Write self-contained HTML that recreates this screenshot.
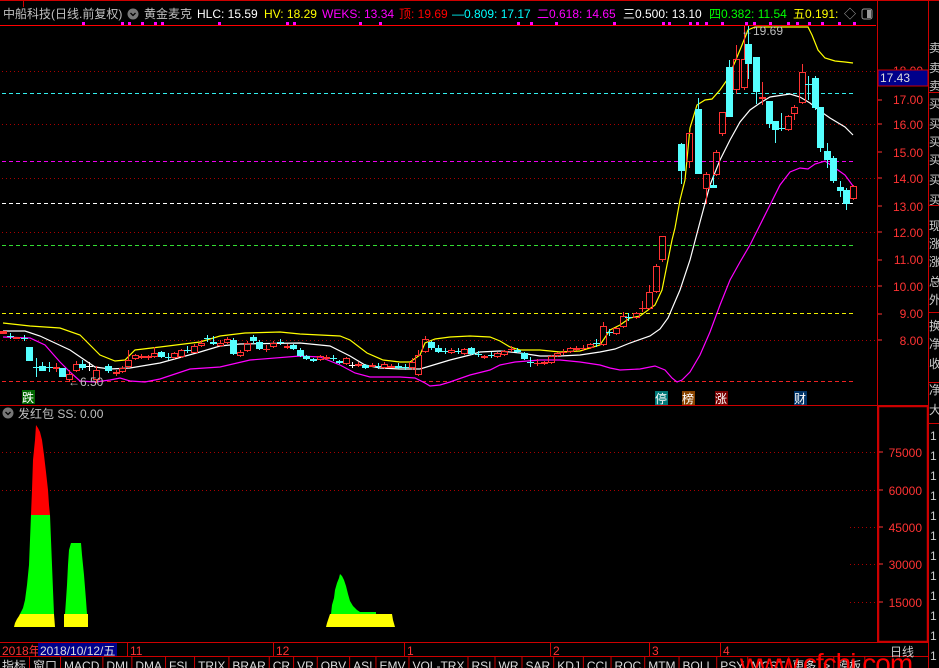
<!DOCTYPE html>
<html><head><meta charset="utf-8">
<style>
html,body{margin:0;padding:0;background:#000;width:939px;height:668px;overflow:hidden}
svg{display:block}
text{font-family:"Liberation Sans","Noto Sans CJK SC",sans-serif;font-size:12px}
</style></head>
<body>
<svg id="s" width="939" height="668" viewBox="0 0 939 668" xmlns="http://www.w3.org/2000/svg">
<rect width="939" height="668" fill="#000"/>
<!-- frame lines -->
<line x1="0" y1="0.5" x2="939" y2="0.5" stroke="#c00"/>
<line x1="23.5" y1="0" x2="23.5" y2="7" stroke="#c00"/>
<line x1="0" y1="25.5" x2="876" y2="25.5" stroke="#f00"/>
<line x1="877.5" y1="0" x2="877.5" y2="642" stroke="#c00"/>
<line x1="928.5" y1="0" x2="928.5" y2="668" stroke="#c00"/>
<line x1="0" y1="405.5" x2="929" y2="405.5" stroke="#c00"/>
<line x1="0" y1="642.5" x2="929" y2="642.5" stroke="#c00"/>
<line x1="0" y1="656.5" x2="929" y2="656.5" stroke="#c00"/>
<!-- header -->
<text x="3" y="18" fill="#c0c0c0">中船科技(日线.前复权)</text>
<circle cx="133" cy="14" r="5.5" fill="#777"/><path d="M130.5 13 L133 15.5 L135.5 13" stroke="#000" fill="none" stroke-width="1.3"/>
<text x="144" y="18" fill="#c0c0c0">黄金麦克</text>
<text x="197" y="18" fill="#fff">HLC: 15.59</text>
<text x="264" y="18" fill="#ff0">HV: 18.29</text>
<text x="322" y="18" fill="#f0f">WEKS: 13.34</text>
<text x="399" y="18" fill="#f00">顶: 19.69</text>
<text x="452" y="18" fill="#0ff">—0.809: 17.17</text>
<text x="537" y="18" fill="#f0f">二0.618: 14.65</text>
<text x="623" y="18" fill="#fff">三0.500: 13.10</text>
<text x="709" y="18" fill="#0f0">四0.382: 11.54</text>
<text x="793" y="18" fill="#ff0">五0.191:</text>
<text x="844" y="18" fill="#aaa">◇</text>
<rect x="862" y="9" width="10" height="10" rx="2" fill="none" stroke="#999"/><rect x="867" y="10" width="4" height="8" fill="#999"/>
<g id="dots" fill="#f0f"></g>
<!-- grid lines -->
<g stroke-width="1">
<g stroke="#a00" stroke-dasharray="1 3">
<line x1="2" y1="71.5" x2="876" y2="71.5"/><line x1="2" y1="124.5" x2="876" y2="124.5"/><line x1="2" y1="178.5" x2="876" y2="178.5"/>
<line x1="2" y1="232.5" x2="876" y2="232.5"/><line x1="2" y1="286.5" x2="876" y2="286.5"/><line x1="2" y1="340.5" x2="876" y2="340.5"/>
<line x1="2" y1="452.5" x2="876" y2="452.5"/><line x1="2" y1="490.5" x2="876" y2="490.5"/>
<line x1="850" y1="527.5" x2="876" y2="527.5"/><line x1="850" y1="564.5" x2="876" y2="564.5"/><line x1="850" y1="602.5" x2="876" y2="602.5"/>
</g>
<g stroke-dasharray="4 3">
<line x1="2" y1="93.5" x2="853" y2="93.5" stroke="#3ee"/>
<line x1="2" y1="161.5" x2="853" y2="161.5" stroke="#e0e"/>
<line x1="2" y1="203.5" x2="853" y2="203.5" stroke="#fff"/>
<line x1="2" y1="245.5" x2="853" y2="245.5" stroke="#3d3"/>
<line x1="2" y1="313.5" x2="853" y2="313.5" stroke="#ee0"/>
<line x1="2" y1="381.5" x2="853" y2="381.5" stroke="#e22"/>
</g>
</g>
<!-- bands -->
<polyline fill="none" stroke="#ff0" stroke-width="1.2" points="3,323 30,326 60,328 80,335 90,345 100,355 115,361 125,360 135,350 160,347 200,342 220,336 245,333 280,332 300,334 340,336 350,340 367,353 383,360 400,362 410,362 420,355 425,343 435,339 450,337 470,336 490,337 500,341 510,347 520,350 540,350 560,352 580,351 600,345 610,330 620,325 630,318 640,316 655,305 662,290 668,260 672,240 675,228 680,200 685,180 690,128 697,105 705,100 712,99 720,90 727,80 735,62 742,45 748,30 755,27 808,27 812,35 818,50 825,58 835,61 845,62 853,63"/>
<polyline fill="none" stroke="#fff" stroke-width="1.2" points="3,331 25,331 40,336 70,350 95,367 110,369 130,368 160,363 200,352 220,346 240,344 300,343 330,346 350,356 365,365 380,368 400,369 420,369 430,366 450,360 470,355 480,352 500,351 520,353 540,356 560,356 580,355 600,352 615,349 630,343 650,336 660,329 668,318 680,290 690,260 700,222 710,185 720,160 730,140 740,122 750,110 760,103 770,97 790,94 800,97 810,103 820,111 830,118 845,127 853,135"/>
<polyline fill="none" stroke="#f0f" stroke-width="1.2" points="3,337 30,338 45,345 60,362 70,372 80,381 95,382 110,380 120,378 130,381 145,382 160,379 190,369 220,367 250,360 300,356 320,357 340,365 355,373 370,377 400,377 415,378 425,383 430,386 440,385 450,382 470,375 490,370 500,365 515,362 540,360 560,360 580,362 600,365 610,368 620,370 640,369 655,366 665,370 672,378 677,382 682,380 690,372 700,355 710,332 720,305 730,280 740,262 750,245 760,225 770,205 780,185 790,172 800,168 808,169 815,164 825,161 835,168 845,175 853,186"/>
<g id="candles"></g>
<!-- price labels -->
<text x="68" y="386" fill="#bbb">←6.50</text>
<text x="741" y="35" fill="#bbb">←19.69</text>
<rect x="22" y="390" width="13" height="14" fill="#060"/><text x="22" y="402" fill="#fff" style="font-size:12px">跌</text>
<rect x="655" y="391" width="13" height="14" fill="#077"/><text x="655" y="403" fill="#fff">停</text>
<rect x="682" y="391" width="13" height="14" fill="#840"/><text x="682" y="403" fill="#fff">榜</text>
<rect x="715" y="391" width="13" height="14" fill="#700"/><text x="715" y="403" fill="#fff">涨</text>
<rect x="794" y="391" width="13" height="14" fill="#036"/><text x="794" y="403" fill="#fff">财</text>
<!-- main axis -->
<g fill="#f33" text-anchor="end">
<text x="923" y="75">18.00</text><text x="923" y="104">17.00</text><text x="923" y="129">16.00</text><text x="923" y="157">15.00</text>
<text x="923" y="183">14.00</text><text x="923" y="211">13.00</text><text x="923" y="237">12.00</text><text x="923" y="264">11.00</text>
<text x="923" y="291">10.00</text><text x="923" y="318">9.00</text><text x="923" y="345">8.00</text>
</g>
<g stroke="#f33"><line x1="878" y1="100" x2="882" y2="100"/><line x1="878" y1="124" x2="882" y2="124"/><line x1="878" y1="152" x2="882" y2="152"/><line x1="878" y1="178" x2="882" y2="178"/><line x1="878" y1="206" x2="882" y2="206"/><line x1="878" y1="232" x2="882" y2="232"/><line x1="878" y1="260" x2="882" y2="260"/><line x1="878" y1="286" x2="882" y2="286"/><line x1="878" y1="314" x2="882" y2="314"/><line x1="878" y1="340" x2="882" y2="340"/></g>
<rect x="878" y="70" width="50" height="16" fill="#00008b" stroke="#c00"/>
<text x="880" y="82" fill="#ddd">17.43</text>
<!-- right column -->
<g fill="#ccc" style="font-size:12px">
<text x="929" y="52">卖</text><text x="929" y="72">卖</text><text x="929" y="90">卖</text><text x="929" y="108">买</text><text x="929" y="128">买</text><text x="929" y="146">买</text><text x="929" y="164">买</text><text x="929" y="184">买</text><text x="929" y="204">买</text>
<text x="929" y="230">现</text><text x="929" y="248">涨</text><text x="929" y="266">涨</text><text x="929" y="286">总</text><text x="929" y="304">外</text><text x="929" y="330">换</text><text x="929" y="348">净</text><text x="929" y="368">收</text><text x="929" y="394">净</text><text x="929" y="414">大</text>
<text x="930" y="440">1</text><text x="930" y="460">1</text><text x="930" y="480">1</text><text x="930" y="500">1</text><text x="930" y="520">1</text><text x="930" y="540">1</text><text x="930" y="560">1</text><text x="930" y="580">1</text><text x="930" y="600">1</text><text x="930" y="620">1</text><text x="930" y="640">1</text><text x="930" y="660">1</text>
</g>
<line x1="928" y1="92.5" x2="939" y2="92.5" stroke="#c00"/><line x1="928" y1="205.5" x2="939" y2="205.5" stroke="#c00"/><line x1="928" y1="312.5" x2="939" y2="312.5" stroke="#c00"/><line x1="928" y1="382.5" x2="939" y2="382.5" stroke="#c00"/><line x1="928" y1="423.5" x2="939" y2="423.5" stroke="#c00"/>
<!-- sub header -->
<circle cx="8" cy="413" r="5.5" fill="#777"/><path d="M5.5 412 L8 414.5 L10.5 412" stroke="#000" fill="none" stroke-width="1.3"/>
<text x="18" y="418" fill="#c0c0c0">发红包 SS: 0.00</text>
<!-- sub histogram -->
<polygon fill="#0f0" points="20,614 23,608 25,600 27,585 29,565 30,540 31,515 50,515 51,540 52,565 53,590 54,614"/>
<polygon fill="#f00" points="31,515 32,490 33,460 35,440 36,425 38,428 40,432 42,440 44,455 46,472 48,490 49,505 50,515"/>
<polygon fill="#ff0" points="14,627 15,623 17,619 19,616 20,614 54,614 55,627"/>
<polygon fill="#0f0" points="65,614 66,600 67,585 68,565 69,550 71,543 81,543 82,555 84,575 86,600 87,614"/>
<rect x="64" y="614" width="24" height="13" fill="#ff0"/>
<polygon fill="#0f0" points="331,614 332,605 334,598 335,590 337,583 339,578 340,574 342,576 344,580 346,586 348,594 350,601 353,606 357,610 360,612 376,612 376,614"/>
<polygon fill="#ff0" points="326,627 327,623 329,617 330,614 392,614 393,620 395,627"/>
<!-- sub axis -->
<rect x="878.5" y="406.5" width="49" height="235" fill="none" stroke="#c00" stroke-width="1.5"/>
<g fill="#f33" text-anchor="end"><text x="922" y="457">75000</text><text x="922" y="495">60000</text><text x="922" y="532">45000</text><text x="922" y="569">30000</text><text x="922" y="607">15000</text></g>
<g stroke="#f33"><line x1="879" y1="452" x2="883" y2="452"/><line x1="879" y1="490" x2="883" y2="490"/><line x1="879" y1="527" x2="883" y2="527"/><line x1="879" y1="564" x2="883" y2="564"/><line x1="879" y1="602" x2="883" y2="602"/></g>
<!-- date bar -->
<text x="2" y="655" fill="#f33">2018年</text>
<rect x="38" y="643" width="79" height="13" fill="#00008b"/>
<text x="40" y="655" fill="#ddd">2018/10/12/五</text>
<g stroke="#c00"><line x1="127.5" y1="643" x2="127.5" y2="656"/><line x1="273.5" y1="643" x2="273.5" y2="656"/><line x1="404.5" y1="643" x2="404.5" y2="656"/><line x1="550.5" y1="643" x2="550.5" y2="656"/><line x1="649.5" y1="643" x2="649.5" y2="656"/><line x1="720.5" y1="643" x2="720.5" y2="656"/></g>
<g fill="#f33"><text x="130" y="655">11</text><text x="276" y="655">12</text><text x="407" y="655">1</text><text x="553" y="655">2</text><text x="652" y="655">3</text><text x="723" y="655">4</text></g>
<text x="890" y="656" fill="#ccc">日线</text>
<!-- tabs -->
<g fill="#ddd" style="font-size:11px" id="tabs"></g>
<text x="740" y="673" fill="#f00" style="font-size:28px;letter-spacing:-1px">www.cfchi.com</text>
</svg>
<script>
var NS="http://www.w3.org/2000/svg";
function el(p,t,a){var e=document.createElementNS(NS,t);for(var k in a)e.setAttribute(k,a[k]);p.appendChild(e);return e;}
var d=document.getElementById('dots');
[82,121,128,141,154,161,218,286,293,359,379,517,530,555,613,662,668,689,696,705,721,745,753,769,787,796,808,821,838,853].forEach(function(x){el(d,'rect',{x:x,y:22,width:3,height:3});});
// candles: [x, top, bottom, high, low, type] type:1 red hollow, 0 cyan filled, 2 cross cyan, 3 cross red, 4 cross white, 5 red filled
var C=[[3,331,334,331,334,5],[10,336,336,333,339,2],[16,337,339,337,339,5],[24,338,338,335,341,2],[29,347,361,347,361,0],[36,367,367,358,377,2],[42,366,371,362,371,0],[49,367,367,362,372,2],[56,367,369,363,372,5],[62,368,377,368,377,0],[69,374,380,370,382,1],[76,364,371,361,372,1],[82,364,368,360,370,0],[89,366,366,362,371,4],[96,370,380,366,383,1],[108,366,371,364,373,0],[116,372,374,370,376,5],[122,368,372,366,373,1],[128,360,367,350,368,1],[135,355,359,354,360,1],[141,356,357,354,359,5],[148,356,358,355,360,5],[154,353,357,347,358,1],[161,352,357,351,358,0],[168,357,357,353,360,2],[174,353,358,352,359,1],[181,350,357,349,358,1],[187,350,350,346,353,2],[194,346,353,344,353,1],[201,343,346,340,347,1],[207,338,338,335,342,2],[213,342,344,336,345,0],[220,343,346,340,347,1],[227,339,343,337,344,1],[233,340,354,338,355,0],[240,352,356,350,357,1],[247,343,351,341,352,1],[253,337,341,335,344,0],[259,342,349,340,350,0],[266,349,349,345,352,3],[273,343,347,341,348,1],[280,342,342,339,345,2],[287,346,348,344,349,5],[293,345,349,344,350,0],[300,350,356,348,357,0],[306,356,359,355,360,0],[313,359,361,358,362,0],[320,356,360,355,361,1],[326,357,359,355,360,5],[333,358,358,355,361,2],[339,361,363,360,364,0],[346,358,364,357,365,1],[352,365,365,362,368,4],[358,364,366,362,367,5],[365,365,368,364,369,0],[372,365,366,363,367,5],[378,366,366,363,369,2],[384,364,368,362,369,1],[391,366,367,364,368,5],[398,366,367,363,369,0],[405,367,367,364,370,2],[412,362,368,358,370,1],[418,355,375,350,376,1],[425,339,352,336,353,1],[431,342,348,341,350,0],[438,348,352,345,353,0],[445,351,351,348,354,2],[451,350,353,348,354,1],[458,351,351,348,354,2],[464,349,354,348,355,1],[471,348,354,347,355,0],[478,354,354,351,357,2],[484,356,358,355,359,5],[491,355,355,352,358,2],[497,353,357,352,358,1],[504,351,355,350,356,1],[511,349,349,346,352,3],[517,350,352,348,353,0],[524,353,359,352,360,0],[530,362,362,357,367,2],[537,363,363,359,366,3],[544,362,364,361,365,5],[551,356,363,355,364,1],[557,353,356,352,357,1],[563,352,352,349,355,3],[570,348,352,347,353,1],[576,348,350,346,351,5],[583,348,348,345,351,3],[590,344,348,343,349,1],[596,343,343,339,347,2],[603,326,345,322,346,1],[609,332,332,329,336,2],[616,328,334,327,335,1],[623,316,327,312,328,1],[628,317,317,313,321,2],[636,313,318,312,319,1],[642,308,308,301,312,3],[649,292,309,285,310,1],[656,266,292,264,293,1],[662,236,260,236,262,1],[681,144,171,143,184,0],[689,133,162,132,168,1],[698,109,174,98,174,0],[706,174,189,172,204,1],[713,185,188,162,188,0],[716,152,175,150,176,1],[722,112,134,112,136,1],[729,67,117,60,117,0],[736,59,90,45,94,1],[744,59,88,26,90,1],[748,44,64,26,79,0],[756,57,92,57,104,0],[762,97,99,82,105,5],[769,101,124,101,128,0],[775,121,130,121,143,0],[781,128,128,113,131,2],[788,116,130,115,131,1],[794,107,114,105,120,1],[802,72,103,64,104,1],[808,84,84,76,100,2],[815,78,108,76,110,0],[820,107,148,107,152,0],[827,151,160,143,168,0],[833,158,181,156,183,0],[840,187,191,181,197,0],[846,190,204,188,210,0],[853,186,199,185,200,1]];
var g=document.getElementById('candles');
C.forEach(function(c){var x=c[0],t=c[1],b=c[2],h=c[3],l=c[4],ty=c[5];
var col=(ty==0||ty==2)?'#5ff':(ty==4?'#fff':'#f33');
if(ty==1){el(g,'line',{x1:x+.5,y1:h,x2:x+.5,y2:t,stroke:col});el(g,'line',{x1:x+.5,y1:b,x2:x+.5,y2:l,stroke:col});el(g,'rect',{x:x-2.5,y:t+.5,width:6,height:Math.max(1,b-t-1),fill:'none',stroke:col});}
else if(ty==0||ty==5){el(g,'line',{x1:x+.5,y1:h,x2:x+.5,y2:l,stroke:col});el(g,'rect',{x:x-3,y:t,width:7,height:Math.max(2,b-t),fill:col});}
else{el(g,'line',{x1:x+.5,y1:h,x2:x+.5,y2:l,stroke:col});el(g,'line',{x1:x-3,y1:t+.5,x2:x+4,y2:t+.5,stroke:col});}
});
var tabs=['指标','窗口','MACD','DMI','DMA','FSL','TRIX','BRAR','CR','VR','OBV','ASI','EMV','VOL-TRX','RSI','WR','SAR','KDJ','CCI','ROC','MTM','BOLL','PSY','MCST','更多','>','模板'];
var tg=document.getElementById('tabs');var x=2;
tabs.forEach(function(t){var e=el(tg,'text',{x:x,y:670});e.textContent=t;var w=e.getComputedTextLength();el(tg,'line',{x1:x+w+3.5,y1:657,x2:x+w+3.5,y2:668,stroke:'#c00'});x+=w+7;});
</script>
</body></html>
